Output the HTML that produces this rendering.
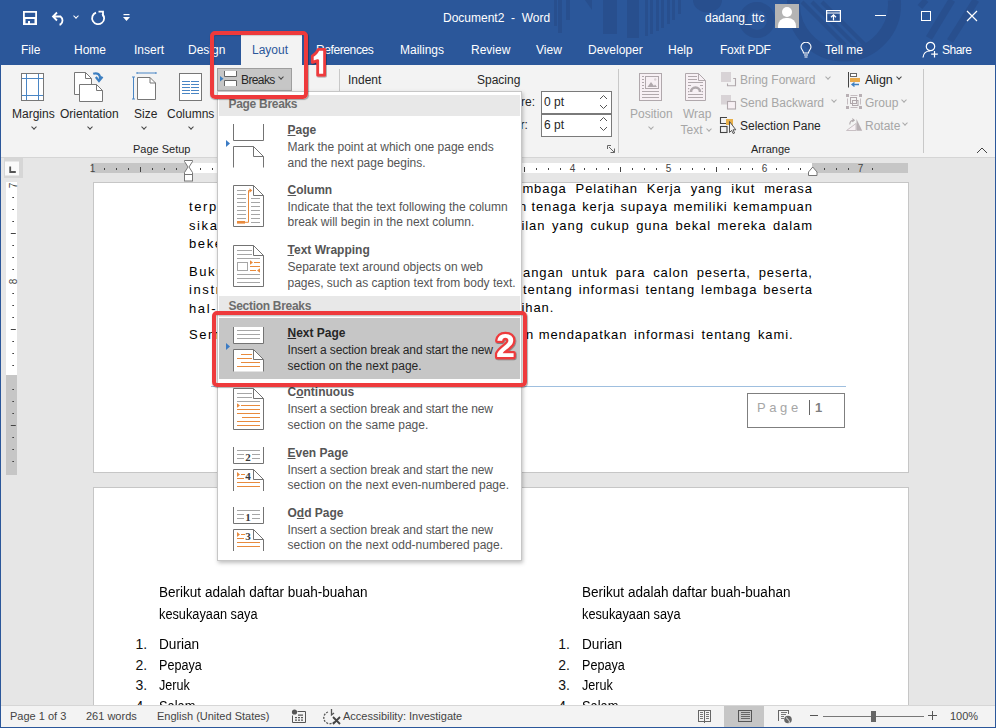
<!DOCTYPE html>
<html><head><meta charset="utf-8">
<style>
*{margin:0;padding:0;box-sizing:border-box}
html,body{width:996px;height:728px;overflow:hidden;background:#e6e6e6;font-family:"Liberation Sans",sans-serif}
.a{position:absolute;white-space:nowrap}
#title{position:absolute;left:0;top:0;width:996px;height:65px;background:#2b579a;overflow:hidden}
.tw{color:#fff;font-size:12px}
#ribbon{position:absolute;left:1px;top:65px;width:994px;height:93px;background:#f3f3f3;border-bottom:1px solid #d5d5d5}
.rt{font-size:12px;color:#262626}
.dis{color:#a6a6a6}
.chev{position:absolute;width:5px;height:5px;border-right:1px solid #444;border-bottom:1px solid #444;transform:rotate(45deg)}
.chev.g{border-color:#aaa}
.sep{position:absolute;width:1px;background:#c8c8c8}
#doc{position:absolute;left:1px;top:158px;width:994px;height:547px;background:#e6e6e6;overflow:hidden}
.page{position:absolute;background:#fff;border:1px solid #c6c6c6}
.pt{font-size:12px;color:#1e1e1e}
#status{position:absolute;left:1px;top:705px;width:994px;height:22px;background:#f3f3f3;border-top:1px solid #d6d6d6}
.st{font-size:11px;color:#444}
#menu{position:absolute;left:217px;top:91px;width:305px;height:470px;background:#fff;border:1px solid #c6c6c6;box-shadow:1px 2px 4px rgba(0,0,0,.25)}
.mh{position:absolute;left:1px;width:302px;height:22px;background:#e8e8e8}
.mht{position:absolute;left:10px;top:4px;font-size:12px;font-weight:bold;color:#666}
.mi{position:absolute;left:69px;font-size:12px;color:#444}
.mtitle{font-weight:bold;color:#444}
.red{position:absolute;border:4px solid #ee3a3c;border-radius:5px;box-shadow:0.5px 1px 1px rgba(0,0,0,.3),inset 0.5px 1px 1px rgba(0,0,0,.15)}
</style></head><body>
<div id="title">
<svg class="a" style="left:0;top:0" width="996" height="65">
<g fill="#284f8e">
<rect x="554" y="0" width="3" height="26"/>
<rect x="558" y="0" width="4" height="33"/>
<rect x="566" y="0" width="4" height="20"/>
<polygon points="585,0 592,0 592,10"/>
<rect x="603" y="0" width="14" height="34"/>
<rect x="627" y="0" width="12" height="38"/>
<rect x="645" y="0" width="3" height="36"/>
<rect x="650" y="0" width="3" height="34"/>
<rect x="656" y="0" width="3" height="31"/>
<rect x="661" y="0" width="3" height="28"/>
<rect x="667" y="0" width="3" height="24"/>
<rect x="672" y="0" width="3" height="20"/>
<rect x="678" y="0" width="3" height="14"/>
<path d="M693,0 A14.5,12.5 0 0 0 722,0 Z"/>
</g>
<g fill="none" stroke="#284f8e">
<circle cx="757" cy="20" r="14" stroke-width="8"/>
<path d="M793.7,0 A50.5,50.5 0 1 0 894.3,0" stroke-width="13"/>
</g>
<g stroke="#284f8e" stroke-width="4">
<line x1="802" y1="2" x2="845" y2="45"/>
<line x1="812" y1="2" x2="855" y2="45"/>
<line x1="822" y1="2" x2="865" y2="45"/>
<line x1="920" y1="7" x2="926" y2="0" stroke-width="6"/>
<line x1="929" y1="38" x2="952" y2="0" stroke-width="7"/>
<line x1="950" y1="41" x2="976" y2="0" stroke-width="7"/>
</g>
</svg>
<!-- QAT -->
<svg class="a" style="left:22px;top:10px" width="16" height="16"><path d="M1,1 H15 V15 H1 Z M2.8,2.8 V7 H13.2 V2.8 Z M3.5,9 V13.2 H6 V11 H8 V13.2 H12.5 V9 Z" fill="#fff" fill-rule="evenodd"/></svg>
<svg class="a" style="left:51px;top:10px" width="16" height="16"><path d="M2,6.5 H9.5 A5,5 0 0 1 9.5,14.5 H8.5 M6,2.5 L2,6.5 L6,10.5" fill="none" stroke="#fff" stroke-width="1.8"/></svg>
<div class="chev" style="left:74px;top:14px;border-color:#fff;width:4px;height:4px"></div>
<svg class="a" style="left:90px;top:10px" width="16" height="16"><path d="M6,2.6 A6,6 0 1 0 12.2,3.8" fill="none" stroke="#fff" stroke-width="1.8"/><path d="M8.5,1.6 H13 V6.5" fill="none" stroke="#fff" stroke-width="1.8"/></svg>
<svg class="a" style="left:123px;top:14px" width="7" height="8"><rect x="0.5" y="0" width="6" height="1.2" fill="#fff"/><polygon points="0,3 7,3 3.5,7" fill="#fff"/></svg>
<div class="a tw" style="left:443px;top:11px;font-size:12px">Document2&nbsp; -&nbsp; Word</div>
<div class="a tw" style="left:705px;top:11px;font-size:12px">dadang_ttc</div>
<div class="a" style="left:775px;top:4px;width:24px;height:24px;background:#b4b4b4;overflow:hidden">
<div class="a" style="left:7px;top:3px;width:10px;height:10px;border-radius:50%;background:#fff"></div>
<div class="a" style="left:3px;top:14px;width:18px;height:14px;border-radius:8px 8px 0 0;background:#fff"></div></div>
<svg class="a" style="left:826px;top:10px" width="15" height="12"><rect x="0.6" y="0.6" width="13.8" height="10.8" fill="none" stroke="#fff" stroke-width="1.2"/><line x1="0.6" y1="3" x2="14.4" y2="3" stroke="#fff" stroke-width="1"/><path d="M7.5,10.5 V5 M5,7.2 L7.5,4.8 L10,7.2" fill="none" stroke="#fff" stroke-width="1.2"/></svg>
<div class="a" style="left:875px;top:15px;width:11px;height:1px;background:#fff"></div>
<div class="a" style="left:921px;top:11px;width:10px;height:10px;border:1px solid #fff"></div>
<svg class="a" style="left:966px;top:10px" width="12" height="12"><path d="M1,1 L11,11 M11,1 L1,11" stroke="#fff" stroke-width="1.2"/></svg>
<!-- tabs -->
<div class="a" style="left:241px;top:35px;width:61px;height:30px;background:#f3f3f3"></div>
<div class="a tw" style="left:21px;top:43px">File</div>
<div class="a tw" style="left:74px;top:43px">Home</div>
<div class="a tw" style="left:134px;top:43px">Insert</div>
<div class="a tw" style="left:188px;top:43px">Design</div>
<div class="a tw" style="left:252px;top:43px;color:#2b579a">Layout</div>
<div class="a tw" style="left:316px;top:43px;letter-spacing:-0.4px">References</div>
<div class="a tw" style="left:400px;top:43px">Mailings</div>
<div class="a tw" style="left:471px;top:43px">Review</div>
<div class="a tw" style="left:536px;top:43px">View</div>
<div class="a tw" style="left:588px;top:43px">Developer</div>
<div class="a tw" style="left:668px;top:43px">Help</div>
<div class="a tw" style="left:720px;top:43px;letter-spacing:-0.3px">Foxit PDF</div>
<svg class="a" style="left:800px;top:42px" width="12" height="16"><path d="M3.5,11 C3.5,8.5 1,7.5 1,5 A5,4.8 0 0 1 11,5 C11,7.5 8.5,8.5 8.5,11 Z M4,13 H8 M4.5,15 H7.5" fill="none" stroke="#fff" stroke-width="1.1"/></svg>
<div class="a tw" style="left:825px;top:43px">Tell me</div>
<svg class="a" style="left:922px;top:41px" width="17" height="17"><circle cx="8.5" cy="5.5" r="4.2" fill="none" stroke="#fff" stroke-width="1.2"/><path d="M1,16.5 C1.5,12 4.5,10 8,10" fill="none" stroke="#fff" stroke-width="1.2"/><path d="M12.5,10 V16.5 M9.2,13.2 H15.8" stroke="#fff" stroke-width="1.2"/></svg>
<div class="a tw" style="left:942px;top:43px;letter-spacing:-0.5px">Share</div>
</div>
<div id="ribbon">
<!-- Margins -->
<svg class="a" style="left:20px;top:8px" width="24" height="29"><rect x="0.5" y="0.5" width="22" height="27" fill="#fff" stroke="#777"/><path d="M5.5,1 V27 M17.5,1 V27 M1,5.5 H22 M1,22.5 H22" stroke="#4a86c5" stroke-width="1"/></svg>
<div class="a rt" style="left:11px;top:42px">Margins</div>
<div class="chev" style="left:31px;top:60px;width:4px;height:4px"></div>
<!-- Orientation -->
<svg class="a" style="left:72px;top:6px" width="32" height="32"><path d="M1.5,1.5 H12.5 L18.5,7.5 V23.5 H1.5 Z" fill="#fff" stroke="#777"/><path d="M12.5,1.5 V7.5 H18.5" fill="none" stroke="#777"/><path d="M6.5,13.5 H23.5 L29.5,19.5 V30.5 H6.5 Z" fill="#fff" stroke="#777"/><path d="M23.5,13.5 V19.5 H29.5" fill="none" stroke="#777"/><path d="M20.2,2.8 C24,1.5 27.5,3 27,8" fill="none" stroke="#3d7fc1" stroke-width="2.2"/><path d="M22.8,6 L26,10 L29.5,5.8" fill="none" stroke="#3d7fc1" stroke-width="2.2"/></svg>
<div class="a rt" style="left:59px;top:42px">Orientation</div>
<div class="chev" style="left:87px;top:60px;width:4px;height:4px"></div>
<!-- Size -->
<svg class="a" style="left:130px;top:7px" width="27" height="30"><path d="M6,1 H25 M6,0 V2 M25,0 V2" stroke="#4a86c5"/><path d="M2.5,5 V27 M1,5 H4 M1,27 H4" stroke="#4a86c5"/><path d="M6.5,5.5 H19 L24.5,11 V27.5 H6.5 Z" fill="#fff" stroke="#777"/><path d="M19,5.5 V11 H24.5" fill="none" stroke="#777"/></svg>
<div class="a rt" style="left:133px;top:42px">Size</div>
<div class="chev" style="left:141px;top:60px;width:4px;height:4px"></div>
<!-- Columns -->
<svg class="a" style="left:177px;top:8px" width="25" height="29"><rect x="1.5" y="0.5" width="22" height="27" fill="#fff" stroke="#777"/><path d="M4,8.5 H12 M13,8.5 H21 M4,11.5 H12 M13,11.5 H21 M4,14.5 H12 M13,14.5 H21 M4,17.5 H12 M13,17.5 H21 M4,20.5 H12 M13,20.5 H21" stroke="#4a86c5"/></svg>
<div class="a rt" style="left:166px;top:42px">Columns</div>
<div class="chev" style="left:188px;top:60px;width:4px;height:4px"></div>
<div class="a rt" style="left:132px;top:78px;font-size:11px">Page Setup</div>

<!-- Breaks button -->
<div class="a" style="left:216px;top:3px;width:75px;height:23px;background:#c6c6c6;border:1px solid #9e9e9e"></div>
<svg class="a" style="left:219px;top:6px" width="20" height="18"><polygon points="0,5 3.5,7.8 0,10.6" fill="#3d7fc1"/><path d="M4.5,0 V5.5 H16.5 V0" fill="#fff" stroke="#666"/><path d="M4.5,15 V9.5 H16.5 V15" fill="#fff" stroke="#666"/></svg>
<div class="a rt" style="left:240px;top:8px;letter-spacing:-0.6px">Breaks</div>
<div class="chev" style="left:278px;top:10px;width:4px;height:4px"></div>
<div class="sep" style="left:338px;top:4px;height:22px"></div>
<div class="a rt" style="left:347px;top:8px">Indent</div>
<div class="a rt" style="left:476px;top:8px">Spacing</div>
<div class="a rt" style="left:520px;top:30px">re:</div>
<div class="a rt" style="left:519.5px;top:53px">r:</div>
<div class="a" style="left:540px;top:26px;width:71px;height:23px;background:#fff;border:1px solid #7a7a7a"></div>
<div class="a" style="left:540px;top:49px;width:71px;height:23px;background:#fff;border:1px solid #7a7a7a"></div>
<div class="a rt" style="left:543px;top:30px">0 pt</div>
<div class="a rt" style="left:543px;top:53px">6 pt</div>
<svg class="a" style="left:598px;top:29px" width="9" height="40"><path d="M1,5 L4.5,1.5 L8,5 M1,11 L4.5,14.5 L8,11 M1,27 L4.5,23.5 L8,27 M1,33 L4.5,36.5 L8,33" fill="none" stroke="#555" stroke-width="1"/></svg>
<svg class="a" style="left:606px;top:80px" width="9" height="8"><path d="M0.5,4 V0.5 H4 M2,2 L7.5,7.5 M7.5,3.5 V7.5 H3.5" fill="none" stroke="#666"/></svg>
<div class="sep" style="left:617px;top:4px;height:84px"></div>
<!-- Position -->
<svg class="a" style="left:638px;top:8px" width="24" height="29"><rect x="0.5" y="0.5" width="22" height="27" fill="#f7f0f4" stroke="#b0a8ac"/><rect x="6.5" y="3.5" width="13" height="12" fill="#f7f0f4" stroke="#b0a8ac"/><polygon points="8.5,14 12,9 15,13 16,11.5 18,14" fill="#b0a8ac"/><circle cx="16.2" cy="6.5" r="1.2" fill="#d8d0d4"/><path d="M3,3.5 H5 M3,6.5 H5 M3,9.5 H5 M3,12.5 H5 M3,15.5 H5 M3,18.5 H20 M3,21.5 H20 M3,24.5 H20" stroke="#b0a8ac"/></svg>
<div class="a rt dis" style="left:629px;top:42px">Position</div>
<div class="chev g" style="left:648px;top:60px;width:4px;height:4px"></div>
<!-- Wrap Text -->
<svg class="a" style="left:683px;top:8px" width="23" height="29"><path d="M1.5,0.5 H14.5 L21.5,7.5 V27.5 H1.5 Z" fill="#f7f0f4" stroke="#b0a8ac"/><path d="M14.5,0.5 V7.5 H21.5" fill="none" stroke="#b0a8ac"/><path d="M4,3.5 H13 M4,6.5 H13 M4,9.5 H19 M4,12.5 H7 M16,12.5 H19 M4,21.5 H19 M4,24.5 H19" stroke="#b0a8ac"/><path d="M4,15 h1.2 v1.3 h-1.2z M17.8,15 h1.2 v1.3 h-1.2z M4,18 h1.2 v1.3 h-1.2z M17.8,18 h1.2 v1.3 h-1.2z" fill="#b0a8ac"/><path d="M7,19 A4.5,4.5 0 0 1 16,19" fill="none" stroke="#b0a8ac" stroke-width="2.6"/></svg>
<div class="a rt dis" style="left:682px;top:42px">Wrap</div>
<div class="a rt dis" style="left:679.5px;top:58px">Text</div>
<div class="chev g" style="left:706px;top:62px;width:4px;height:4px"></div>
<!-- Bring/Send/Selection -->
<svg class="a" style="left:719px;top:7px" width="17" height="16"><rect x="1" y="0" width="10" height="10" fill="#d8d3d6"/><path d="M7.5,11.5 V13.8 H15.5 V6.5 H13.2" fill="none" stroke="#b0a8ac" stroke-width="1.1"/></svg>
<div class="a rt dis" style="left:739px;top:8px">Bring Forward</div>
<div class="chev g" style="left:825px;top:10px;width:4px;height:4px"></div>
<svg class="a" style="left:719px;top:30px" width="17" height="16"><rect x="1" y="0" width="10" height="9.5" fill="#d8d3d6"/><rect x="7.5" y="6.5" width="8" height="7.5" fill="#f7f0f4" stroke="#b0a8ac" stroke-width="1.1"/></svg>
<div class="a rt dis" style="left:739px;top:31px">Send Backward</div>
<div class="chev g" style="left:831px;top:33px;width:4px;height:4px"></div>
<svg class="a" style="left:718px;top:52px" width="18" height="17"><path d="M8,0.5 H1.5 V6.5 H8" fill="none" stroke="#444" stroke-width="1.1"/><rect x="1.5" y="9.5" width="6.5" height="6" fill="none" stroke="#444" stroke-width="1.1"/><rect x="7" y="2" width="7" height="6" fill="#e8b04a"/><path d="M10.5,4.5 V15.5 L12.6,13.4 L14.2,16.6 L15.6,16 L14,12.8 H16.8 Z" fill="#f3f3f3" stroke="#444" stroke-width="0.9" stroke-linejoin="round"/></svg>
<div class="a rt" style="left:739px;top:54px">Selection Pane</div>
<div class="a rt" style="left:750px;top:78px;font-size:11px">Arrange</div>
<!-- Align/Group/Rotate -->
<svg class="a" style="left:846px;top:7px" width="14" height="16"><path d="M1.5,0 V15.5" stroke="#444"/><rect x="3.5" y="1.5" width="6" height="3" fill="#fff" stroke="#666"/><rect x="3" y="6" width="10" height="4" fill="#e8a94a"/><path d="M12,12.5 H5 M7.5,10.5 L5,12.5 L7.5,14.5" fill="none" stroke="#3d7fc1" stroke-width="1.3"/></svg>
<div class="a rt" style="left:864px;top:8px;font-size:12.5px;color:#222">Align</div>
<div class="chev" style="left:896px;top:10px;width:4px;height:4px"></div>
<svg class="a" style="left:845px;top:29px" width="17" height="16"><path d="M0,0 h3 v3 h-3z M13,0 h3 v3 h-3z M0,12 h3 v3 h-3z M13,12 h3 v3 h-3z" fill="#b8b0b4"/><path d="M4.5,1.5 H11.5 M4.5,13.5 H11.5 M1.5,4.5 V10.5 M14.5,4.5 V10.5" stroke="#c4bcc0" stroke-width="1"/><rect x="4.5" y="3.5" width="6" height="6" fill="none" stroke="#b0a8ac"/><rect x="6.5" y="6.5" width="5.5" height="5" fill="none" stroke="#b0a8ac"/></svg>
<div class="a rt dis" style="left:864px;top:31px">Group</div>
<div class="chev g" style="left:901px;top:33px;width:4px;height:4px"></div>
<svg class="a" style="left:845px;top:53px" width="17" height="14"><polygon points="0.5,12.5 10,12.5 10,5.5" fill="#f7f0f4" stroke="#c8c0c4"/><polygon points="10.5,12.8 16.2,12.8 10.5,1" fill="#b8b0b4"/><path d="M3.8,6.5 C3.8,3.5 5,2.2 7.8,2.2" fill="none" stroke="#b0a8ac" stroke-width="1.1"/><path d="M6.3,0.6 L8.2,2.2 L6.3,3.8" fill="none" stroke="#b0a8ac" stroke-width="1.1"/></svg>
<div class="a rt dis" style="left:864px;top:54px">Rotate</div>
<div class="chev g" style="left:902px;top:56px;width:4px;height:4px"></div>
<div class="sep" style="left:922px;top:4px;height:84px"></div>
<svg class="a" style="left:975px;top:82px" width="13" height="7"><path d="M1,6 L6,1 L11,6" fill="none" stroke="#444" stroke-width="1"/></svg>
</div>
<div id="doc">
<svg class="a" style="left:-1px;top:-158px" width="996" height="728">
<rect x="91.5" y="163" width="96.5" height="10" fill="#c6c6c6"/>
<rect x="188" y="163" width="624" height="10" fill="#fff"/>
<rect x="812" y="163" width="96" height="10" fill="#c6c6c6"/>
<rect x="104.0" y="168" width="1" height="2" fill="#444"/><rect x="116.0" y="168" width="1" height="2" fill="#444"/><rect x="128.0" y="168" width="1" height="2" fill="#444"/><rect x="140.0" y="167" width="1" height="5" fill="#444"/><rect x="152.0" y="168" width="1" height="2" fill="#444"/><rect x="164.0" y="168" width="1" height="2" fill="#444"/><rect x="176.0" y="168" width="1" height="2" fill="#444"/><rect x="200.0" y="168" width="1" height="2" fill="#444"/><rect x="212.0" y="168" width="1" height="2" fill="#444"/><rect x="224.0" y="168" width="1" height="2" fill="#444"/><rect x="236.0" y="167" width="1" height="5" fill="#444"/><rect x="248.0" y="168" width="1" height="2" fill="#444"/><rect x="260.0" y="168" width="1" height="2" fill="#444"/><rect x="272.0" y="168" width="1" height="2" fill="#444"/><rect x="296.0" y="168" width="1" height="2" fill="#444"/><rect x="308.0" y="168" width="1" height="2" fill="#444"/><rect x="320.0" y="168" width="1" height="2" fill="#444"/><rect x="332.0" y="167" width="1" height="5" fill="#444"/><rect x="344.0" y="168" width="1" height="2" fill="#444"/><rect x="356.0" y="168" width="1" height="2" fill="#444"/><rect x="368.0" y="168" width="1" height="2" fill="#444"/><rect x="392.0" y="168" width="1" height="2" fill="#444"/><rect x="404.0" y="168" width="1" height="2" fill="#444"/><rect x="416.0" y="168" width="1" height="2" fill="#444"/><rect x="428.0" y="167" width="1" height="5" fill="#444"/><rect x="440.0" y="168" width="1" height="2" fill="#444"/><rect x="452.0" y="168" width="1" height="2" fill="#444"/><rect x="464.0" y="168" width="1" height="2" fill="#444"/><rect x="488.0" y="168" width="1" height="2" fill="#444"/><rect x="500.0" y="168" width="1" height="2" fill="#444"/><rect x="512.0" y="168" width="1" height="2" fill="#444"/><rect x="524.0" y="167" width="1" height="5" fill="#444"/><rect x="536.0" y="168" width="1" height="2" fill="#444"/><rect x="548.0" y="168" width="1" height="2" fill="#444"/><rect x="560.0" y="168" width="1" height="2" fill="#444"/><rect x="584.0" y="168" width="1" height="2" fill="#444"/><rect x="596.0" y="168" width="1" height="2" fill="#444"/><rect x="608.0" y="168" width="1" height="2" fill="#444"/><rect x="620.0" y="167" width="1" height="5" fill="#444"/><rect x="632.0" y="168" width="1" height="2" fill="#444"/><rect x="644.0" y="168" width="1" height="2" fill="#444"/><rect x="656.0" y="168" width="1" height="2" fill="#444"/><rect x="680.0" y="168" width="1" height="2" fill="#444"/><rect x="692.0" y="168" width="1" height="2" fill="#444"/><rect x="704.0" y="168" width="1" height="2" fill="#444"/><rect x="716.0" y="167" width="1" height="5" fill="#444"/><rect x="728.0" y="168" width="1" height="2" fill="#444"/><rect x="740.0" y="168" width="1" height="2" fill="#444"/><rect x="752.0" y="168" width="1" height="2" fill="#444"/><rect x="776.0" y="168" width="1" height="2" fill="#444"/><rect x="788.0" y="168" width="1" height="2" fill="#444"/><rect x="800.0" y="168" width="1" height="2" fill="#444"/><rect x="812.0" y="167" width="1" height="5" fill="#444"/><rect x="824.0" y="168" width="1" height="2" fill="#444"/><rect x="836.0" y="168" width="1" height="2" fill="#444"/><rect x="848.0" y="168" width="1" height="2" fill="#444"/><rect x="872.0" y="168" width="1" height="2" fill="#444"/>
<text x="92.5" y="172" font-size="10" fill="#444" text-anchor="middle" font-family="Liberation Sans">1</text><text x="284.5" y="172" font-size="10" fill="#444" text-anchor="middle" font-family="Liberation Sans">1</text><text x="380.5" y="172" font-size="10" fill="#444" text-anchor="middle" font-family="Liberation Sans">2</text><text x="476.5" y="172" font-size="10" fill="#444" text-anchor="middle" font-family="Liberation Sans">3</text><text x="572.5" y="172" font-size="10" fill="#444" text-anchor="middle" font-family="Liberation Sans">4</text><text x="668.5" y="172" font-size="10" fill="#444" text-anchor="middle" font-family="Liberation Sans">5</text><text x="764.5" y="172" font-size="10" fill="#444" text-anchor="middle" font-family="Liberation Sans">6</text><text x="860.5" y="172" font-size="10" fill="#444" text-anchor="middle" font-family="Liberation Sans">7</text>
<rect x="4" y="158" width="19" height="20" fill="#d6d6d6"/>
<rect x="5" y="161.5" width="14" height="14" fill="#fafafa"/>
<path d="M10.2,166.5 V172 H15.8" fill="none" stroke="#555" stroke-width="1.8"/>
<rect x="6" y="182" width="11" height="193" fill="#fff"/>
<rect x="6" y="375" width="11" height="100" fill="#c6c6c6"/>
<rect x="12.3" y="197.0" width="1.7" height="1" fill="#444"/><rect x="12.3" y="209.0" width="1.7" height="1" fill="#444"/><rect x="12.3" y="221.0" width="1.7" height="1" fill="#444"/><rect x="10.8" y="233.0" width="5" height="1" fill="#444"/><rect x="12.3" y="245.0" width="1.7" height="1" fill="#444"/><rect x="12.3" y="257.0" width="1.7" height="1" fill="#444"/><rect x="12.3" y="269.0" width="1.7" height="1" fill="#444"/><rect x="12.3" y="293.0" width="1.7" height="1" fill="#444"/><rect x="12.3" y="305.0" width="1.7" height="1" fill="#444"/><rect x="12.3" y="317.0" width="1.7" height="1" fill="#444"/><rect x="10.8" y="329.0" width="5" height="1" fill="#444"/><rect x="12.3" y="341.0" width="1.7" height="1" fill="#444"/><rect x="12.3" y="353.0" width="1.7" height="1" fill="#444"/><rect x="12.3" y="365.0" width="1.7" height="1" fill="#444"/><rect x="12.3" y="389.0" width="1.7" height="1" fill="#444"/><rect x="12.3" y="401.0" width="1.7" height="1" fill="#444"/><rect x="12.3" y="413.0" width="1.7" height="1" fill="#444"/><rect x="10.8" y="425.0" width="5" height="1" fill="#444"/><rect x="12.3" y="437.0" width="1.7" height="1" fill="#444"/><rect x="12.3" y="449.0" width="1.7" height="1" fill="#444"/><rect x="12.3" y="461.0" width="1.7" height="1" fill="#444"/>
<text x="13" y="185.5" font-size="10" fill="#444" text-anchor="middle" dominant-baseline="central" transform="rotate(-90 13 185.5)" font-family="Liberation Sans">7</text>
<text x="13" y="281.5" font-size="10" fill="#444" text-anchor="middle" dominant-baseline="central" transform="rotate(-90 13 281.5)" font-family="Liberation Sans">8</text>
<!-- indent markers -->
<path d="M184.5,160.5 H192.5 V161.5 L189,167 L192.5,172.5 V174.5 H184.5 V172.5 L188,167 L184.5,161.5 Z" fill="#fff" stroke="#777"/>
<rect x="184.5" y="174.5" width="8" height="6.5" fill="#fff" stroke="#777"/>
<path d="M808.5,175.5 H817 V172 L812.75,167 L808.5,172 Z" fill="#fff" stroke="#777"/>
</svg>
<div class="page" style="left:92px;top:24px;width:816px;height:291px"></div>
<div class="page" style="left:92px;top:329px;width:816px;height:260px"></div>
</div>
<div class="a" style="left:189.0px;top:197.7px;font-size:13px;line-height:18px;letter-spacing:1.6px;color:#000;">terpanggil</div>
<div class="a" style="left:189.0px;top:216.5px;font-size:13px;line-height:18px;letter-spacing:1.6px;color:#000;">sikap</div>
<div class="a" style="left:189.0px;top:235.4px;font-size:13px;line-height:18px;letter-spacing:1.6px;color:#000;">bekerja</div>
<div class="a" style="left:189.0px;top:262.7px;font-size:13px;line-height:18px;letter-spacing:1.6px;color:#000;">Buku</div>
<div class="a" style="left:189.0px;top:281.2px;font-size:13px;line-height:18px;letter-spacing:1.6px;color:#000;">instruktur</div>
<div class="a" style="left:189.0px;top:299.5px;font-size:13px;line-height:18px;letter-spacing:1.6px;color:#000;">hal-hal</div>
<div class="a" style="left:189.0px;top:325.5px;font-size:13px;line-height:18px;letter-spacing:1.6px;color:#000;">Semoga</div>
<div class="a" style="left:522.4px;top:179.9px;font-size:13px;line-height:18px;letter-spacing:0.9px;color:#000;width:290.5px;text-align:justify;text-align-last:justify;white-space:normal;">mbaga Pelatihan Kerja yang ikut merasa</div>
<div class="a" style="left:519px;top:197.5px;font-size:13px;line-height:18px;letter-spacing:0.9px;color:#000;">n</div>
<div class="a" style="left:531.4px;top:197.5px;font-size:13px;line-height:18px;letter-spacing:0.9px;color:#000;width:281.5px;text-align:justify;text-align-last:justify;white-space:normal;">tenaga kerja supaya memiliki kemampuan</div>
<div class="a" style="left:521.5px;top:216.6px;font-size:13px;line-height:18px;letter-spacing:0.9px;color:#000;width:291.4px;text-align:justify;text-align-last:justify;white-space:normal;">ilan yang cukup guna bekal mereka dalam</div>
<div class="a" style="left:523.0px;top:263.8px;font-size:13px;line-height:18px;letter-spacing:0.9px;color:#000;width:289.9px;text-align:justify;text-align-last:justify;white-space:normal;">angan untuk para calon peserta, peserta,</div>
<div class="a" style="left:523.0px;top:281.4px;font-size:13px;line-height:18px;letter-spacing:0.9px;color:#000;width:289.9px;text-align:justify;text-align-last:justify;white-space:normal;">tentang informasi tentang lembaga beserta</div>
<div class="a" style="left:521.5px;top:299.4px;font-size:13px;line-height:18px;letter-spacing:0.9px;color:#000;">ihan.</div>
<div class="a" style="left:526px;top:325.5px;font-size:13px;line-height:18px;letter-spacing:0.9px;color:#000;">n</div>
<div class="a" style="left:538.7px;top:325.5px;font-size:13px;line-height:18px;letter-spacing:0.9px;color:#000;width:254.8px;text-align:justify;text-align-last:justify;white-space:normal;">mendapatkan informasi tentang kami.</div>
<div class="a" style="left:211px;top:386px;width:635px;height:1px;background:#9fbfdf"></div>
<div class="a" style="left:747px;top:393px;width:98px;height:35px;border:1px solid #7f7f7f;background:#fff"></div>
<div class="a" style="left:757px;top:400px;font-size:13px;letter-spacing:3.6px;color:#a6a6a6">Page</div>
<div class="a" style="left:808.5px;top:400px;width:1px;height:15px;background:#666"></div>
<div class="a" style="left:815px;top:400px;font-size:13px;font-weight:bold;color:#7f7f7f">1</div>
<div class="a" style="left:159.4px;top:582.4px;font-size:14px;line-height:20px;color:#000;transform:scaleX(0.967);transform-origin:0 0">Berikut adalah daftar buah-buahan</div>
<div class="a" style="left:159.4px;top:603.5px;font-size:14px;line-height:20px;color:#000;transform:scaleX(0.911);transform-origin:0 0">kesukayaan saya</div>
<div class="a" style="left:135.5px;top:634.4px;font-size:14px;line-height:20px;color:#111">1.</div>
<div class="a" style="left:159.4px;top:634.4px;font-size:14px;line-height:20px;color:#000;transform:scaleX(0.975);transform-origin:0 0">Durian</div>
<div class="a" style="left:135.5px;top:654.9px;font-size:14px;line-height:20px;color:#111">2.</div>
<div class="a" style="left:159.4px;top:654.9px;font-size:14px;line-height:20px;color:#000;transform:scaleX(0.900);transform-origin:0 0">Pepaya</div>
<div class="a" style="left:135.5px;top:675.4px;font-size:14px;line-height:20px;color:#111">3.</div>
<div class="a" style="left:159.4px;top:675.4px;font-size:14px;line-height:20px;color:#000;transform:scaleX(0.900);transform-origin:0 0">Jeruk</div>
<div class="a" style="left:135.5px;top:695.9px;font-size:14px;line-height:20px;color:#111">4.</div>
<div class="a" style="left:159.4px;top:695.9px;font-size:14px;line-height:20px;color:#000;transform:scaleX(0.920);transform-origin:0 0">Salam</div>
<div class="a" style="left:582.2px;top:582.4px;font-size:14px;line-height:20px;color:#000;transform:scaleX(0.967);transform-origin:0 0">Berikut adalah daftar buah-buahan</div>
<div class="a" style="left:582.2px;top:603.5px;font-size:14px;line-height:20px;color:#000;transform:scaleX(0.911);transform-origin:0 0">kesukayaan saya</div>
<div class="a" style="left:558.3px;top:634.4px;font-size:14px;line-height:20px;color:#111">1.</div>
<div class="a" style="left:582.2px;top:634.4px;font-size:14px;line-height:20px;color:#000;transform:scaleX(0.975);transform-origin:0 0">Durian</div>
<div class="a" style="left:558.3px;top:654.9px;font-size:14px;line-height:20px;color:#111">2.</div>
<div class="a" style="left:582.2px;top:654.9px;font-size:14px;line-height:20px;color:#000;transform:scaleX(0.900);transform-origin:0 0">Pepaya</div>
<div class="a" style="left:558.3px;top:675.4px;font-size:14px;line-height:20px;color:#111">3.</div>
<div class="a" style="left:582.2px;top:675.4px;font-size:14px;line-height:20px;color:#000;transform:scaleX(0.900);transform-origin:0 0">Jeruk</div>
<div class="a" style="left:558.3px;top:695.9px;font-size:14px;line-height:20px;color:#111">4.</div>
<div class="a" style="left:582.2px;top:695.9px;font-size:14px;line-height:20px;color:#000;transform:scaleX(0.920);transform-origin:0 0">Salam</div>
<div id="status">
<div class="a st" style="left:9px;top:4px">Page 1 of 3</div>
<div class="a st" style="left:85px;top:4px">261 words</div>
<div class="a st" style="left:156px;top:4px">English (United States)</div>
<svg class="a" style="left:290px;top:3px" width="16" height="15"><circle cx="3.5" cy="3" r="2.6" fill="#555"/><path d="M6.5,2.5 H14.5 V13.5 H1.5 V6.5" fill="none" stroke="#555"/><path d="M4,8 h2 v1.2 h-2z M7,8 h2 v1.2 h-2z M10,8 h2 v1.2 h-2z M4,10.5 h2 v1.2 h-2z M7,10.5 h2 v1.2 h-2z M10,10.5 h2 v1.2 h-2z M7,5.5 h5 v1.2 h-5z" fill="#555"/></svg>
<svg class="a" style="left:322px;top:2px" width="18" height="17"><path d="M5,4 A6,6 0 1 0 11,14" fill="none" stroke="#555" stroke-width="1.3" stroke-dasharray="2,1.3"/><path d="M8.5,1 V7 L11,5" fill="none" stroke="#555" stroke-width="1.3"/><path d="M10,9 L17,16 M17,9 L10,16" stroke="#444" stroke-width="1.8"/></svg>
<div class="a st" style="left:342px;top:4px">Accessibility: Investigate</div>
<svg class="a" style="left:696px;top:3px" width="15" height="14" shape-rendering="crispEdges"><path d="M1.5,1.5 H13.5 V12.5 H1.5 Z M7.5,1.5 V13.5" fill="none" stroke="#666"/><path d="M3,3.5 H6 M3,5.5 H6 M3,7.5 H6 M3,9.5 H6 M9,3.5 H12 M9,5.5 H12 M9,7.5 H12 M9,9.5 H12" stroke="#777"/></svg>
<div class="a" style="left:723px;top:0px;width:40px;height:21px;background:#c6c6c6"></div>
<svg class="a" style="left:736px;top:3px" width="16" height="14" shape-rendering="crispEdges"><path d="M1.5,1.5 H14.5 V12.5 H1.5 Z" fill="none" stroke="#555"/><path d="M1.5,1 V13 M14.5,1 V13 M1,1.5 H15 M1,12.5 H15" stroke="#555"/><path d="M3.5,3.5 H12.5 M3.5,5.5 H12.5 M3.5,7.5 H12.5 M3.5,9.5 H12.5" stroke="#666"/></svg>
<svg class="a" style="left:776px;top:3px" width="16" height="15"><path d="M1.5,12 V1.5 H11.5 V5" fill="none" stroke="#666" shape-rendering="crispEdges"/><path d="M3.5,3.5 H9.5 M3.5,5.5 H8.5 M3.5,7.5 H7 M3.5,9.5 H7" stroke="#777" shape-rendering="crispEdges"/><circle cx="11" cy="10.5" r="3.8" fill="#666"/><path d="M9,8.5 C10.5,9 10,10.5 11.5,11 C12.5,11.5 12.5,13 12,14" stroke="#f3f3f3" stroke-width="0.9" fill="none"/></svg>
<div class="a" style="left:809px;top:9px;width:8px;height:1.2px;background:#555"></div>
<div class="a" style="left:822px;top:10px;width:101px;height:1px;background:#777"></div>
<div class="a" style="left:870px;top:5px;width:5px;height:11px;background:#666"></div>
<div class="a" style="left:927px;top:9px;width:9px;height:1.2px;background:#555"></div>
<div class="a" style="left:931px;top:5px;width:1.2px;height:9px;background:#555"></div>
<div class="a st" style="left:949px;top:4px">100%</div>
</div>
<div id="menu">
<div class="a" style="left:1px;top:3px;width:301px;height:21px;background:#e8e8e8"></div>
<div class="a" style="left:10.5px;top:4.9px;font-size:12px;line-height:15px;color:#6d6d6d;font-weight:bold;letter-spacing:-0.3px">Page Breaks</div>
<div class="a" style="left:1px;top:204px;width:301px;height:21px;background:#e8e8e8"></div>
<div class="a" style="left:10.5px;top:207.3px;font-size:12px;line-height:15px;color:#6d6d6d;font-weight:bold;letter-spacing:-0.3px">Section Breaks</div>
<div class="a" style="left:1px;top:226px;width:301px;height:61px;background:#c6c6c6"></div>
<div class="a" style="left:69.5px;top:31.1px;font-size:12px;line-height:15px;color:#555;font-weight:bold;"><u>P</u>age</div>
<div class="a" style="left:69.5px;top:48.1px;font-size:12px;line-height:15px;color:#555;">Mark the point at which one page ends</div>
<div class="a" style="left:69.5px;top:63.7px;font-size:12px;line-height:15px;color:#555;">and the next page begins.</div>
<div class="a" style="left:69.5px;top:90.8px;font-size:12px;line-height:15px;color:#555;font-weight:bold;"><u>C</u>olumn</div>
<div class="a" style="left:69.5px;top:107.8px;font-size:12px;line-height:15px;color:#555;">Indicate that the text following the column</div>
<div class="a" style="left:69.5px;top:123.4px;font-size:12px;line-height:15px;color:#555;">break will begin in the next column.</div>
<div class="a" style="left:69.5px;top:150.9px;font-size:12px;line-height:15px;color:#555;font-weight:bold;"><u>T</u>ext Wrapping</div>
<div class="a" style="left:69.5px;top:167.9px;font-size:12px;line-height:15px;color:#555;">Separate text around objects on web</div>
<div class="a" style="left:69.5px;top:183.5px;font-size:12px;line-height:15px;color:#555;">pages, such as caption text from body text.</div>
<div class="a" style="left:69.5px;top:233.9px;font-size:12px;line-height:15px;color:#262626;font-weight:bold;"><u>N</u>ext Page</div>
<div class="a" style="left:69.5px;top:250.9px;font-size:12px;line-height:15px;color:#262626;letter-spacing:-0.12px;">Insert a section break and start the new</div>
<div class="a" style="left:69.5px;top:266.5px;font-size:12px;line-height:15px;color:#262626;">section on the next page.</div>
<div class="a" style="left:69.5px;top:293.3px;font-size:12px;line-height:15px;color:#555;font-weight:bold;">C<u>o</u>ntinuous</div>
<div class="a" style="left:69.5px;top:310.3px;font-size:12px;line-height:15px;color:#555;letter-spacing:-0.12px;">Insert a section break and start the new</div>
<div class="a" style="left:69.5px;top:325.9px;font-size:12px;line-height:15px;color:#555;">section on the same page.</div>
<div class="a" style="left:69.5px;top:353.5px;font-size:12px;line-height:15px;color:#555;font-weight:bold;"><u>E</u>ven Page</div>
<div class="a" style="left:69.5px;top:370.5px;font-size:12px;line-height:15px;color:#555;letter-spacing:-0.12px;">Insert a section break and start the new</div>
<div class="a" style="left:69.5px;top:386.1px;font-size:12px;line-height:15px;color:#555;">section on the next even-numbered page.</div>
<div class="a" style="left:69.5px;top:413.7px;font-size:12px;line-height:15px;color:#555;font-weight:bold;">O<u>d</u>d Page</div>
<div class="a" style="left:69.5px;top:430.7px;font-size:12px;line-height:15px;color:#555;letter-spacing:-0.12px;">Insert a section break and start the new</div>
<div class="a" style="left:69.5px;top:446.3px;font-size:12px;line-height:15px;color:#555;">section on the next odd-numbered page.</div>
<svg class="a" style="left:-1px;top:-1px" width="305" height="468"><g transform="translate(-217,-91)"><polygon points="226,139.9 230,143.4 226,146.9" fill="#3b7bc4"/><path d="M233.5,124 V140.5 H263.5 V124" fill="none" stroke="#737373"/><path d="M233.5,167.5 V146.5 H253.5 L263.5,156.5 V167.5" fill="none" stroke="#737373"/><path d="M253.5,146.5 V156.5 H263.5" fill="none" stroke="#737373"/><path d="M233.5,226.5 V185.5 H253.5 L263.5,195.5 V226.5 Z" fill="#fff" stroke="#737373" stroke-width="1"/><path d="M253.5,185.5 V195.5 H263.5" fill="none" stroke="#737373" stroke-width="1"/><path d="M237,190.5 H246" stroke="#a6a6a6" stroke-width="1"/><path d="M237,194.5 H246" stroke="#a6a6a6" stroke-width="1"/><path d="M237,198.5 H246" stroke="#a6a6a6" stroke-width="1"/><path d="M237,202.5 H246" stroke="#a6a6a6" stroke-width="1"/><path d="M237,206.5 H246" stroke="#a6a6a6" stroke-width="1"/><path d="M237,210.5 H246" stroke="#a6a6a6" stroke-width="1"/><path d="M237,214.5 H246" stroke="#a6a6a6" stroke-width="1"/><path d="M237,218.5 H246" stroke="#a6a6a6" stroke-width="1"/><path d="M251,198.5 H260" stroke="#a6a6a6" stroke-width="1"/><path d="M251,202.5 H260" stroke="#a6a6a6" stroke-width="1"/><path d="M251,206.5 H260" stroke="#a6a6a6" stroke-width="1"/><path d="M251,210.5 H260" stroke="#a6a6a6" stroke-width="1"/><path d="M251,214.5 H260" stroke="#a6a6a6" stroke-width="1"/><path d="M251,218.5 H260" stroke="#a6a6a6" stroke-width="1"/><path d="M251,222.5 H260" stroke="#a6a6a6" stroke-width="1"/><rect x="237" y="221" width="8" height="2.6" fill="#e88a3c"/><path d="M244.5,222.3 H248.5 V190.5 H250" fill="none" stroke="#e88a3c" stroke-width="1"/><polygon points="249.5,188.3 252.3,190.5 249.5,192.7" fill="#e88a3c"/><path d="M233.5,286.5 V245.5 H253.5 L263.5,255.5 V286.5 Z" fill="#fff" stroke="#737373" stroke-width="1"/><path d="M253.5,245.5 V255.5 H263.5" fill="none" stroke="#737373" stroke-width="1"/><path d="M237,250.5 H252" stroke="#a6a6a6" stroke-width="1"/><path d="M237,254.5 H252" stroke="#a6a6a6" stroke-width="1"/><path d="M237,258.5 H260" stroke="#a6a6a6" stroke-width="1"/><rect x="237.5" y="262.5" width="10" height="8" fill="none" stroke="#a6a6a6"/><polygon points="250,260.3 253,262.5 250,264.7" fill="#e88a3c"/><path d="M254,262.5 H260" stroke="#e88a3c" stroke-width="1"/><path d="M250,266.5 H260" stroke="#e88a3c" stroke-width="1"/><path d="M250,270.5 H256" stroke="#e88a3c" stroke-width="1"/><polygon points="260,268.2 257,270.5 260,272.8" fill="#e88a3c"/><path d="M237,274.5 H260" stroke="#a6a6a6" stroke-width="1"/><path d="M237,278.5 H260" stroke="#a6a6a6" stroke-width="1"/><path d="M237,282.5 H260" stroke="#a6a6a6" stroke-width="1"/><polygon points="226,342.9 230,346.4 226,349.9" fill="#3b7bc4"/><path d="M233.5,327 V343.5 H263.5 V327 Z" fill="#fff" stroke="none"/><path d="M233.5,327 V343.5 H263.5 V327" fill="none" stroke="#737373"/><path d="M237,330.5 H260" stroke="#a6a6a6" stroke-width="1"/><path d="M237,334.5 H260" stroke="#a6a6a6" stroke-width="1"/><path d="M237,338.5 H260" stroke="#a6a6a6" stroke-width="1"/><path d="M233.5,371.5 V349.5 H253.5 L263.5,359.5 V371.5 Z" fill="#fff"/><path d="M233.5,371.5 V349.5 H253.5 L263.5,359.5 V371.5" fill="none" stroke="#737373"/><path d="M253.5,349.5 V359.5 H263.5" fill="none" stroke="#737373"/><path d="M241,354.5 H252" stroke="#e88a3c" stroke-width="1"/><path d="M237,358.5 H252" stroke="#e88a3c" stroke-width="1"/><path d="M241,362.5 H260" stroke="#e88a3c" stroke-width="1"/><path d="M237,366.5 H260" stroke="#e88a3c" stroke-width="1"/><path d="M233.5,429.5 V388.5 H253.5 L263.5,398.5 V429.5 Z" fill="#fff" stroke="#737373" stroke-width="1"/><path d="M253.5,388.5 V398.5 H263.5" fill="none" stroke="#737373" stroke-width="1"/><path d="M237,393.5 H252" stroke="#a6a6a6" stroke-width="1"/><path d="M237,397.5 H252" stroke="#a6a6a6" stroke-width="1"/><path d="M237,401.5 H260" stroke="#a6a6a6" stroke-width="1"/><polygon points="237,403.2 240,405.5 237,407.8" fill="#e88a3c"/><path d="M241,405.5 H260" stroke="#e88a3c" stroke-width="1"/><path d="M237,409.5 H260" stroke="#e88a3c" stroke-width="1"/><path d="M237,413.5 H260" stroke="#e88a3c" stroke-width="1"/><path d="M242,417.5 H260" stroke="#e88a3c" stroke-width="1"/><path d="M237,421.5 H260" stroke="#e88a3c" stroke-width="1"/><path d="M237,425.5 H260" stroke="#e88a3c" stroke-width="1"/><path d="M233.5,447 V463.5 H263.5 V447" fill="none" stroke="#737373"/><path d="M237,450.5 H260" stroke="#a6a6a6" stroke-width="1"/><path d="M237,454.5 H244" stroke="#a6a6a6" stroke-width="1"/><path d="M252,454.5 H260" stroke="#a6a6a6" stroke-width="1"/><path d="M237,458.5 H244" stroke="#a6a6a6" stroke-width="1"/><path d="M252,458.5 H260" stroke="#a6a6a6" stroke-width="1"/><text x="248" y="461" font-size="11" font-weight="bold" font-family="Liberation Serif" fill="#3a3a3a" text-anchor="middle">2</text><path d="M233.5,491.0 V469.5 H253.5 L263.5,479.5 V491.0" fill="none" stroke="#737373"/><path d="M253.5,469.5 V479.5 H263.5" fill="none" stroke="#737373"/><polygon points="237,472.0 240,474.5 237,477.0" fill="#e88a3c"/><path d="M241,474.5 H245" stroke="#e88a3c" stroke-width="1"/><path d="M237,478.5 H244" stroke="#e88a3c" stroke-width="1"/><path d="M237,482.5 H260" stroke="#e88a3c" stroke-width="1"/><path d="M237,486.5 H260" stroke="#e88a3c" stroke-width="1"/><text x="248" y="480.0" font-size="11" font-weight="bold" font-family="Liberation Serif" fill="#3a3a3a" text-anchor="middle">4</text><path d="M233.5,507 V523.5 H263.5 V507" fill="none" stroke="#737373"/><path d="M237,510.5 H260" stroke="#a6a6a6" stroke-width="1"/><path d="M237,514.5 H244" stroke="#a6a6a6" stroke-width="1"/><path d="M252,514.5 H260" stroke="#a6a6a6" stroke-width="1"/><path d="M237,518.5 H244" stroke="#a6a6a6" stroke-width="1"/><path d="M252,518.5 H260" stroke="#a6a6a6" stroke-width="1"/><text x="248" y="521" font-size="11" font-weight="bold" font-family="Liberation Serif" fill="#3a3a3a" text-anchor="middle">1</text><path d="M233.5,551.0 V529.5 H253.5 L263.5,539.5 V551.0" fill="none" stroke="#737373"/><path d="M253.5,529.5 V539.5 H263.5" fill="none" stroke="#737373"/><polygon points="237,532.0 240,534.5 237,537.0" fill="#e88a3c"/><path d="M241,534.5 H245" stroke="#e88a3c" stroke-width="1"/><path d="M237,538.5 H244" stroke="#e88a3c" stroke-width="1"/><path d="M237,542.5 H260" stroke="#e88a3c" stroke-width="1"/><path d="M237,546.5 H260" stroke="#e88a3c" stroke-width="1"/><text x="248" y="540.0" font-size="11" font-weight="bold" font-family="Liberation Serif" fill="#3a3a3a" text-anchor="middle">3</text></g></svg>
</div>
<div class="red" style="left:210px;top:31px;width:98px;height:68px"></div>
<div class="red" style="left:212px;top:311px;width:315px;height:76px"></div>
<svg class="a" style="left:0;top:0" width="996" height="728">
<defs><filter id="sh" x="-20%" y="-20%" width="140%" height="140%"><feDropShadow dx="0.6" dy="0.8" stdDeviation="0.6" flood-color="#000" flood-opacity="0.45"/></filter></defs>
<path d="M318.3,49.3 H324.6 V75.2 H317.7 V60.6 L312.3,62.4 V55.9 C315,54.6 317,52.6 318.3,49.3 Z" fill="#fff" stroke="#ee3a3c" stroke-width="2.8" stroke-linejoin="round" filter="url(#sh)"/>
<text x="505.5" y="357" font-family="Liberation Sans" font-weight="bold" font-size="34" fill="#fff" stroke="#ee3a3c" stroke-width="4.5" paint-order="stroke" stroke-linejoin="round" text-anchor="middle" filter="url(#sh)">2</text>
</svg>
<!-- window border -->
<div class="a" style="left:0;top:65px;width:1px;height:663px;background:#2b579a"></div>
<div class="a" style="left:995px;top:65px;width:1px;height:663px;background:#2b579a"></div>
<div class="a" style="left:0;top:727px;width:996px;height:1px;background:#2b579a"></div>
</body></html>
